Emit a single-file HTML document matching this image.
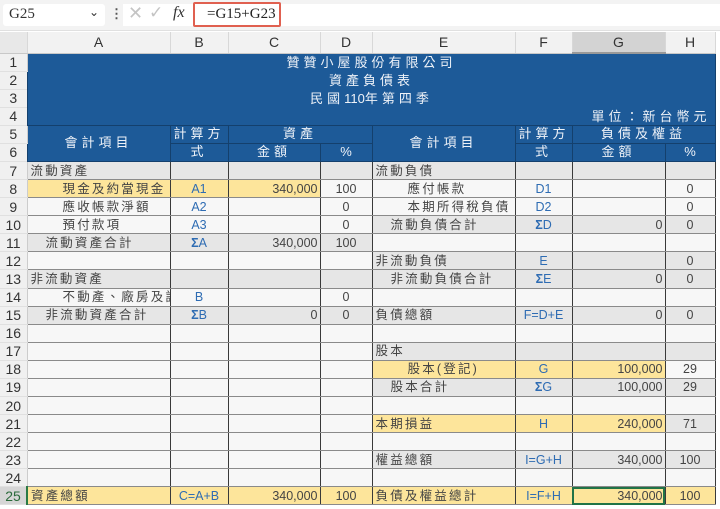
<!DOCTYPE html>
<html><head><meta charset="utf-8">
<style>
*{margin:0;padding:0;box-sizing:border-box}
body{width:720px;height:509px;overflow:hidden;background:#fff;font-family:"Liberation Sans","Noto Sans CJK TC",sans-serif;color:#444;position:relative}
.fb{position:absolute;left:0;top:0;width:720px;height:31px;background:#f3f3f3;border-bottom:1px solid #e0e0e0}
.nb{position:absolute;left:3px;top:4px;width:102px;height:22px;background:#fff;border-radius:3px;font-family:"Liberation Serif",serif;font-size:15px;padding:2px 6px;color:#333}
.nb span{position:absolute;right:6px;top:1px;font-size:12px;font-family:"DejaVu Sans",sans-serif}
.dots{position:absolute;left:110px;top:6px;font-size:13px;color:#555;font-weight:bold}
.fx{position:absolute;left:123px;top:4px;width:597px;height:22px;background:#fff}
.fx .x{position:absolute;left:5px;top:-1px;color:#c4c4c4;font-size:18px;font-family:"DejaVu Sans",sans-serif}
.fx .ck{position:absolute;left:26px;top:-1px;color:#c4c4c4;font-size:17px;font-family:"DejaVu Sans",sans-serif}
.fx .f{position:absolute;left:50px;top:0px;font-family:"Liberation Serif",serif;font-style:italic;font-size:16px;color:#333}
.red{position:absolute;left:193px;top:2px;width:88px;height:25px;border:2px solid #e06050;border-radius:2px;background:#fff;font-family:"Liberation Serif",serif;font-size:15px;color:#222;padding:2px 0 0 12px}
table{position:absolute;left:0;top:32px;border-collapse:collapse;table-layout:fixed;width:715px}
td{height:18.08px;font-size:12.5px;white-space:nowrap;overflow:hidden;padding:0 3px;line-height:16px;border-left:1px solid #3a3a3a;border-right:1px solid #3a3a3a;border-top:1px solid #8a8a8a;border-bottom:1px solid #8a8a8a;background:#f7f7f7;letter-spacing:2.2px}
tr.ch td{height:21px;background:#f2f2f2;border:none;border-right:1px solid #d8d8d8;border-bottom:1px solid #c8c8c8;text-align:center;font-size:14px;color:#333;letter-spacing:0}
td.rh{background:#f0f0f0;border:none;border-bottom:1px solid #e0e0e0;border-right:1px solid #ccc;text-align:center;font-size:14px;color:#333;letter-spacing:0;padding:0}
.g{background:#e6e6e6}
.y{background:#fde59b}
.b{color:#2e6cb3;text-align:center;letter-spacing:0}
.n{text-align:right;letter-spacing:0;padding-right:2px}
.p{text-align:center;letter-spacing:0}
.blue{background:#1d5a98;color:#eef2f8;border-color:#14406d}
.hd{background:#1d5a98;color:#eef2f8;border:1px solid #14406d;text-align:center;font-size:13px;letter-spacing:4px}
.i2{padding-left:35px}.i1{padding-left:18px}
.num{letter-spacing:0}
</style></head><body>
<div class="fb">
<div class="nb">G25<span>⌄</span></div>
<div class="dots">⋮</div>
<div class="fx"><span class="x">✕</span><span class="ck">✓</span><span class="f">fx</span></div>
<div class="red">=G15+G23</div>
</div>
<table>
<colgroup><col style="width:27px"><col style="width:143px"><col style="width:58px"><col style="width:92px"><col style="width:52px"><col style="width:143px"><col style="width:57px"><col style="width:93px"><col style="width:50px"></colgroup>
<tr class="ch"><td style="background:#e8e8e8"></td><td>A</td><td>B</td><td>C</td><td>D</td><td>E</td><td>F</td><td style="background:#d3d3d3;border-bottom:2px solid #999">G</td><td>H</td></tr>
<tr><td class="rh">1</td><td colspan="8" rowspan="4" class="blue" style="position:relative;padding:0;vertical-align:top">
<div style="position:absolute;left:0;width:688px;top:0px;text-align:center;font-size:13px;letter-spacing:4px;line-height:18px">贊贊小屋股份有限公司<br>資產負債表<br>民國<span class="num">110</span>年第四季</div>
<div style="position:absolute;right:4px;top:54px;font-size:13px;letter-spacing:4px;line-height:18px">單位：新台幣元</div>
</td></tr>
<tr><td class="rh">2</td></tr>
<tr><td class="rh">3</td></tr>
<tr><td class="rh">4</td></tr>
<tr><td class="rh">5</td><td rowspan="2" class="hd">會計項目</td><td class="hd">計算方</td><td colspan="2" class="hd">資產</td><td rowspan="2" class="hd">會計項目</td><td class="hd">計算方</td><td colspan="2" class="hd">負債及權益</td></tr>
<tr><td class="rh">6</td><td class="hd">式</td><td class="hd">金額</td><td class="hd" style="letter-spacing:0">%</td><td class="hd">式</td><td class="hd">金額</td><td class="hd" style="letter-spacing:0">%</td></tr>
<tr><td class="rh">7</td><td class="g">流動資產</td><td class="g"></td><td class="g"></td><td class="g"></td><td class="g">流動負債</td><td class="g"></td><td class="g"></td><td class="g"></td></tr>
<tr><td class="rh">8</td><td class="y i2">現金及約當現金</td><td class="y b">A1</td><td class="y n">340,000</td><td class="p">100</td><td class="i2">應付帳款</td><td class="b">D1</td><td></td><td class="p">0</td></tr>
<tr><td class="rh">9</td><td class="i2">應收帳款淨額</td><td class="b">A2</td><td></td><td class="p">0</td><td class="i2">本期所得稅負債</td><td class="b">D2</td><td></td><td class="p">0</td></tr>
<tr><td class="rh">10</td><td class="i2">預付款項</td><td class="b">A3</td><td></td><td class="p">0</td><td class="g i1">流動負債合計</td><td class="g b"><b>Σ</b>D</td><td class="g n">0</td><td class="g p">0</td></tr>
<tr><td class="rh">11</td><td class="g i1">流動資產合計</td><td class="g b"><b>Σ</b>A</td><td class="g n">340,000</td><td class="g p">100</td><td></td><td></td><td></td><td></td></tr>
<tr><td class="rh">12</td><td></td><td></td><td></td><td></td><td class="g">非流動負債</td><td class="g b">E</td><td class="g"></td><td class="g p">0</td></tr>
<tr><td class="rh">13</td><td class="g">非流動資產</td><td class="g"></td><td class="g"></td><td class="g"></td><td class="g i1">非流動負債合計</td><td class="g b"><b>Σ</b>E</td><td class="g n">0</td><td class="g p">0</td></tr>
<tr><td class="rh">14</td><td class="i2">不動產、廠房及設備</td><td class="b">B</td><td></td><td class="p">0</td><td></td><td></td><td></td><td></td></tr>
<tr><td class="rh">15</td><td class="g i1">非流動資產合計</td><td class="g b"><b>Σ</b>B</td><td class="g n">0</td><td class="g p">0</td><td class="g">負債總額</td><td class="g b">F=D+E</td><td class="g n">0</td><td class="g p">0</td></tr>
<tr><td class="rh">16</td><td></td><td></td><td></td><td></td><td></td><td></td><td></td><td></td></tr>
<tr><td class="rh">17</td><td></td><td></td><td></td><td></td><td class="g">股本</td><td class="g"></td><td class="g"></td><td class="g"></td></tr>
<tr><td class="rh">18</td><td></td><td></td><td></td><td></td><td class="y i2">股本(登記)</td><td class="y b">G</td><td class="y n">100,000</td><td class="p">29</td></tr>
<tr><td class="rh">19</td><td></td><td></td><td></td><td></td><td class="g i1">股本合計</td><td class="g b"><b>Σ</b>G</td><td class="g n">100,000</td><td class="g p">29</td></tr>
<tr><td class="rh">20</td><td></td><td></td><td></td><td></td><td></td><td></td><td></td><td></td></tr>
<tr><td class="rh">21</td><td></td><td></td><td></td><td></td><td class="y">本期損益</td><td class="y b">H</td><td class="y n">240,000</td><td class="g p">71</td></tr>
<tr><td class="rh">22</td><td></td><td></td><td></td><td></td><td></td><td></td><td></td><td></td></tr>
<tr><td class="rh">23</td><td></td><td></td><td></td><td></td><td class="g">權益總額</td><td class="g b">I=G+H</td><td class="g n">340,000</td><td class="g p">100</td></tr>
<tr><td class="rh">24</td><td></td><td></td><td></td><td></td><td></td><td></td><td></td><td></td></tr>
<tr><td class="rh" style="background:#d6d6d6;color:#2a6a3a;border-right:2px solid #2a7a45">25</td><td class="y">資產總額</td><td class="y b">C=A+B</td><td class="y n">340,000</td><td class="y p">100</td><td class="y">負債及權益總計</td><td class="y b">I=F+H</td><td class="y n" style="outline:2px solid #217346;outline-offset:-2px">340,000</td><td class="y p">100</td></tr>
</table>
</body></html>
